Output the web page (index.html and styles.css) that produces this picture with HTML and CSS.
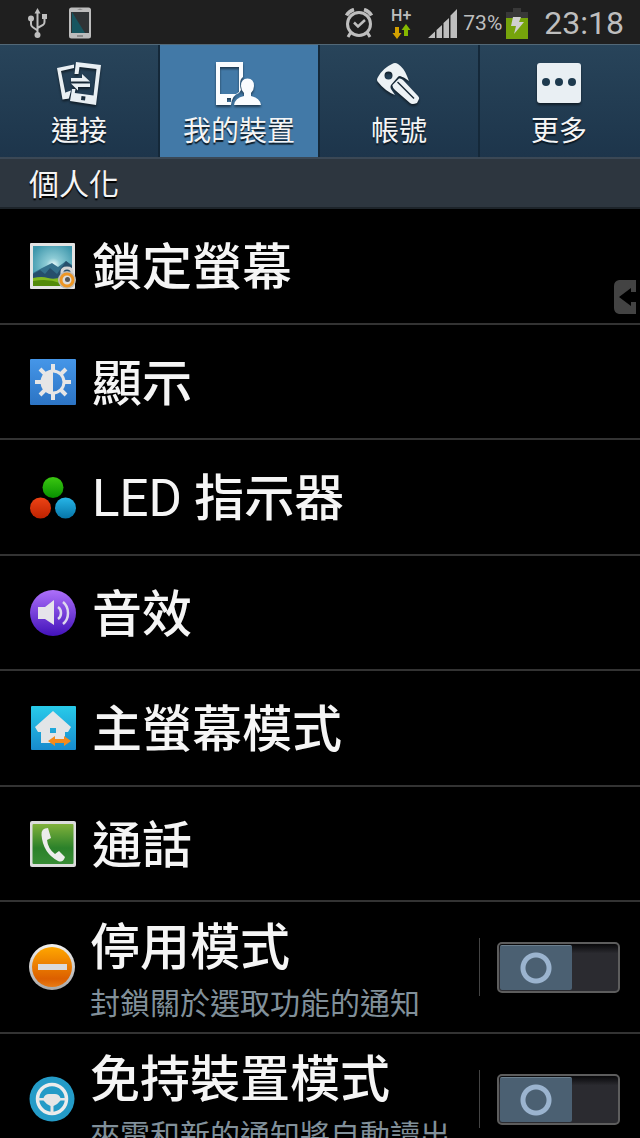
FILE: index.html
```html
<!DOCTYPE html>
<html lang="zh-Hant">
<head>
  <meta charset="UTF-8">
  <meta name="viewport" content="width=device-width, initial-scale=1.0">
  <title>設定</title>
  <link rel="stylesheet" href="styles.css">
</head>
<body>
  <header class="status-bar">
    <div class="status-left">
      <svg width="20" height="32" viewBox="0 0 20 32" fill="none" stroke="#bebebe" stroke-width="2">
        <path d="M9.500 27V5M9.500 23.500L4.500 20Q3 19 3 17V12M9.500 21L15 18Q16.500 17 16.500 15V10" stroke-width="2" />
        <path d="M9.500 1L12.500 6.500H6.500Z M14 7H19V12H14Z" fill="#bebebe" stroke="none" />
        <circle cx="3" cy="11.500" r="3" fill="#bebebe" stroke="none" />
        <circle cx="9.500" cy="28" r="3" fill="#bebebe" stroke="none" />
      </svg>
      <svg width="24" height="32" viewBox="0 0 24 32">
        <rect x="1" y="0.500" width="22" height="31" rx="2.500" fill="#bcbcbc" />
        <rect x="3" y="5" width="18" height="21" fill="#2f3335" />
        <path d="M4 5L17 26H4Z" fill="#17555f" />
        <path d="M9 3L12 1.500L15 3ZM9 28H15V30H9Z" fill="#8c8c8c" />
      </svg>
    </div>
    <div class="status-right">
      <svg width="28" height="30" viewBox="0 0 28 30" fill="none" stroke="#bebebe">
        <circle cx="14" cy="16" r="11.500" stroke-width="3" />
        <path d="M9 14.500L13 18.500L20 12" stroke-width="2.500" />
        <path d="M1.500 7.500Q4 3 9 1.500M26.500 7.500Q24 3 19 1.500" stroke-width="3.500" />
        <path d="M6 24L3 29M22 24L25 29" stroke-width="3" />
      </svg>
      <div class="network">
        <span>H+</span>
        <svg width="20" height="15" viewBox="0 0 20 15">
          <path d="M4 3H8V9H10.500L6 15L1.500 9H4Z" fill="#d2a000" />
          <path d="M13 12H17V6H19.500L15 0L10.500 6H13Z" fill="#85b800" />
        </svg>
      </div>
      <svg class="signal" width="30" height="30" viewBox="0 0 30 30" fill="#bebebe">
        <path d="M0 30L7 23.500V30ZM8.500 22L14 17V30H8.500ZM15.500 15L21 10V30H15.500ZM22.500 7.500L29 1V30H22.500Z" />
      </svg>
      <span class="percent">73%</span>
      <svg class="battery" width="22" height="32" viewBox="0 0 22 32">
        <path d="M7 1H15V5H22V32H0V5H7Z" fill="#383838" />
        <path d="M0 11H22V32H0Z" fill="#76a40b" />
        <path d="M7 10L15 10L13 15H18L8 27L10 19H5Z" fill="#d0d0d0" />
      </svg>
      <time class="clock">23:18</time>
    </div>
  </header>

  <nav class="tabs">
    <button class="tab">
      <svg width="48" height="48" viewBox="0 0 48 48">
        <g fill="#e9eff3">
          <path d="M2 8L19 4.500V8L6 11L10.500 33.500L13 33L14 38.500L7.500 39.500Z" />
          <path d="M10.500 32.500L16 30.500L14 38L8 39Z" />
          <path fill-rule="evenodd" d="M21 2L46 5L41 45L15 41L17 29L20.500 29L19.800 33L38.500 35.500L41.500 9L24.500 7L23.500 14H19.500ZM26.500 36L26 40L30 40.500L30.500 36.500Z" />
          <path d="M16 18H27V14L35 21.500H16ZM35 23.500H16L23 30.500V27H35Z" />
        </g>
      </svg>
      <span>連接</span>
    </button>
    <button class="tab active">
      <svg width="48" height="48" viewBox="0 0 48 48">
        <g fill="#fafcfe">
          <path fill-rule="evenodd" d="M1 2H28V17Q25 19 25 24Q25 27 26 30L24 33Q17 35 16 45H1ZM5 7V34H21L24 32V7ZM12 38V42H16V38Z" />
          <path d="M32.500 18.500Q39 18.500 39 26Q39 30 36 33V36Q45 38 46 45H19Q20 38 29 36V33Q26 30 26 26Q26 18.500 32.500 18.500Z" />
        </g>
      </svg>
      <span>我的裝置</span>
    </button>
    <button class="tab">
      <svg width="48" height="48" viewBox="0 0 48 48">
        <g fill="#edf2f5">
          <path fill-rule="evenodd" d="M17 4Q20 2 23 4Q29 8 32 16L34 21Q29 17 25 16Q23 16 22 18L16 25Q15 27 16 29L20 35Q10 31 3 22Q1 20 3 17Q8 8 17 4ZM13.500 11.500A4 4 0 1 0 13.500 19.500A4 4 0 1 0 13.500 11.500Z" />
          <path fill-rule="evenodd" d="M17.500 25L24 18.500Q26 18 28 20L43 36Q45 38 43.500 40L42 43Q37 45 35 43L20 30Q17 27 17.500 25ZM22 22.500L38.500 39L39.500 38L23 21.500Z" />
        </g>
      </svg>
      <span>帳號</span>
    </button>
    <button class="tab">
      <svg width="48" height="48" viewBox="0 0 48 48">
        <rect x="2" y="3" width="44" height="40" rx="3" fill="#e9eff3" />
        <g fill="#1e3a4e">
          <circle cx="11" cy="22" r="4" />
          <circle cx="24" cy="22" r="4" />
          <circle cx="37" cy="22" r="4" />
        </g>
      </svg>
      <span>更多</span>
    </button>
  </nav>

  <main>
    <h2 class="section-title">個人化</h2>

    <ul class="list">
      <li>
        <a class="row" href="#lock">
          <svg width="46" height="46" viewBox="0 0 46 46">
            <defs>
              <radialGradient id="sky" cx="0.520" cy="0.480" r="0.600">
                <stop offset="0" stop-color="#f2ffff" />
                <stop offset="0.300" stop-color="#8ccbd5" />
                <stop offset="1" stop-color="#3f97ac" />
              </radialGradient>
            </defs>
            <rect width="45" height="46" rx="1" fill="#e4e4e4" />
            <rect x="3" y="3" width="39" height="40" fill="url(#sky)" />
            <path d="M3 30L12 25L22 20L28 24L36 18L42 22V36H3Z" fill="#34708b" />
            <path d="M3 31L10 27L15 31L20 25L27 31L36 18L42 23V36H3Z" fill="#264e6b" />
            <path d="M3 35Q12 33 18 35T32 34V43H3Z" fill="#83ba20" />
            <path d="M3 38Q18 35 30 40V43H3Z" fill="#528a0b" />
            <path d="M32 32V29Q32 25 37 25T42 29V32" fill="none" stroke="#d4d4d4" stroke-width="3" />
            <circle cx="37" cy="37" r="9" fill="#bcbcbc" />
            <circle cx="37" cy="37" r="6" fill="#ddd" stroke="#ed9624" stroke-width="3" />
            <circle cx="37.500" cy="36.500" r="2.500" fill="#555" />
          </svg>
          <span class="title">鎖定螢幕</span>
        </a>
      </li>
      <li>
        <a class="row" href="#display">
          <svg width="46" height="46" viewBox="0 0 46 46">
            <defs>
              <linearGradient id="blue" x2="0" y2="1">
                <stop offset="0" stop-color="#4596e8" />
                <stop offset="1" stop-color="#2c74c4" />
              </linearGradient>
            </defs>
            <rect width="46" height="46" rx="1" fill="url(#blue)" />
            <g stroke="#e6e6e6" stroke-width="4" fill="none">
              <path d="M23 5V12M23 34V41M5 23H12M34 23H41M10 10L15 15M31 31L36 36M36 10L31 15M15 31L10 36" />
              <circle cx="23" cy="23" r="11" stroke-width="3" />
            </g>
            <path d="M23 11A12 12 0 0 0 23 35Z" fill="#e6e6e6" />
          </svg>
          <span class="title">顯示</span>
        </a>
      </li>
      <li>
        <a class="row" href="#led">
          <svg width="46" height="46" viewBox="0 0 46 46">
            <defs>
              <linearGradient id="green" x2="0" y2="1"><stop stop-color="#3bc711" /><stop offset="1" stop-color="#079100" /></linearGradient>
              <linearGradient id="red" x2="0" y2="1"><stop stop-color="#ed4315" /><stop offset="1" stop-color="#bd2200" /></linearGradient>
              <linearGradient id="cyan" x2="0" y2="1"><stop stop-color="#27b5e7" /><stop offset="1" stop-color="#0675a8" /></linearGradient>
            </defs>
            <circle cx="23" cy="13.500" r="10.500" fill="url(#green)" />
            <circle cx="10.500" cy="34" r="10.500" fill="url(#red)" />
            <circle cx="35.500" cy="34" r="10.500" fill="url(#cyan)" />
          </svg>
          <span class="title"><span class="latin">LED</span> 指示器</span>
        </a>
      </li>
      <li>
        <a class="row" href="#sound">
          <svg width="46" height="46" viewBox="0 0 46 46">
            <defs>
              <linearGradient id="purple" x2="0" y2="1"><stop stop-color="#ad70fa" /><stop offset="1" stop-color="#4212ba" /></linearGradient>
            </defs>
            <circle cx="23" cy="23" r="23" fill="url(#purple)" />
            <path d="M8 17H15L24 10V35L15 29H8Z" fill="#e6e4ea" />
            <path d="M28 17Q31 19 31 23T28 29M33 12Q38 16 38 23T33 34" fill="none" stroke="#ddd8ee" stroke-width="2.500" />
          </svg>
          <span class="title">音效</span>
        </a>
      </li>
      <li>
        <a class="row" href="#home">
          <svg width="46" height="46" viewBox="0 0 46 46">
            <defs>
              <linearGradient id="aqua" x2="0" y2="1"><stop stop-color="#28cbea" /><stop offset="1" stop-color="#178acd" /></linearGradient>
            </defs>
            <rect x="1" y="1" width="45" height="44" rx="1" fill="url(#aqua)" />
            <path fill-rule="evenodd" d="M23 6L41 22L38 27H35V38H11V27H8L5 22ZM20 23V28H26V23Z" fill="#e2e5e7" />
            <path d="M18 36L25 31V34H34V31L41 36L34 41V38H25V41Z" fill="#f38a1c" />
          </svg>
          <span class="title">主螢幕模式</span>
        </a>
      </li>
      <li>
        <a class="row" href="#call">
          <svg width="46" height="46" viewBox="0 0 46 46">
            <defs>
              <linearGradient id="leaf" x2="0" y2="1"><stop stop-color="#80b13b" /><stop offset="0.600" stop-color="#2b812a" /><stop offset="1" stop-color="#388c35" /></linearGradient>
            </defs>
            <rect width="46" height="46" rx="2" fill="#dcdcdc" />
            <rect x="2.500" y="3" width="41" height="40" rx="1" fill="url(#leaf)" />
            <path d="M18 7Q11 7 11.500 14Q13 32 28 40Q33 42 35 36L29 30L25 33Q18 28 17 19L21 17Z" fill="#ececec" />
          </svg>
          <span class="title">通話</span>
        </a>
      </li>
      <li class="row switch-row">
        <svg width="46" height="46" viewBox="0 0 46 46">
          <defs>
            <linearGradient id="orange" x2="0" y2="1"><stop stop-color="#ffa600" /><stop offset="0.800" stop-color="#dc5f00" /><stop offset="1" stop-color="#e87b16" /></linearGradient>
            <linearGradient id="rim" x2="0" y2="1"><stop stop-color="#f0f0f0" /><stop offset="1" stop-color="#a8a8a8" /></linearGradient>
          </defs>
          <circle cx="23" cy="23" r="23" fill="url(#rim)" />
          <circle cx="23" cy="23" r="20" fill="url(#orange)" />
          <rect x="9" y="20" width="29" height="6" fill="#dadada" />
        </svg>
        <label class="text" for="blocking">
          <span class="title">停用模式</span>
          <span class="subtitle">封鎖關於選取功能的通知</span>
        </label>
        <div class="switch-box">
          <input type="checkbox" class="switch" id="blocking">
        </div>
      </li>
      <li class="row switch-row">
        <svg width="46" height="46" viewBox="0 0 46 46">
          <circle cx="23" cy="23" r="22.500" fill="#249bc7" />
          <circle cx="23" cy="23" r="14.500" fill="none" stroke="#ececec" stroke-width="3.500" />
          <path d="M9 22H14.500Q16 18 20 18H26Q30 18 31.500 22H37V24.500H31.500Q29 28 24.500 30V38H21.500V30Q17 28 14.500 24.500H9Z" fill="#e6e6e6" />
        </svg>
        <label class="text" for="driving">
          <span class="title">免持裝置模式</span>
          <span class="subtitle">來電和新的通知將自動讀出</span>
        </label>
        <div class="switch-box">
          <input type="checkbox" class="switch" id="driving">
        </div>
      </li>
    </ul>
  </main>

  <button class="handle" aria-label="開啟面板">
    <svg width="24" height="36" viewBox="0 0 24 36">
      <path d="M23 1H6Q1 2 1 7V29Q1 34 6 35H23V23H18V27L6 18L18 9V13H23Z" fill="#434343" />
    </svg>
  </button>
</body>
</html>
```
FILE: styles.css
```css
* {
  box-sizing: border-box;
}

body {
  position: relative;
  height: 100vh;
  margin: 0;
  overflow: hidden;
  background: #000;
  color: #f5f5f5;
  font-family: Roboto, "Noto Sans CJK TC", sans-serif;
}

svg {
  display: block;
  flex-shrink: 0;
}

button {
  border: none;
  padding: 0;
  background: none;
  color: inherit;
  font-family: inherit;
  cursor: pointer;
}

/* status bar */

.status-bar {
  display: flex;
  align-items: center;
  justify-content: space-between;
  height: 44px;
  padding: 2px 16px 0 28px;
  background: #1f1f1f;
  color: #bebebe;
}

.status-left,
.status-right {
  display: flex;
  align-items: center;
}

.status-left {
  gap: 20px;
}

.network {
  display: flex;
  flex-direction: column;
  align-items: center;
  margin: 0 17px 0 18px;
  font-size: 16px;
  font-weight: 500;
  line-height: 16px;
}

.percent {
  margin: 0 4px 0 5px;
  font-size: 21px;
}

.clock {
  margin-left: 16px;
  font-size: 32px;
  line-height: 40px;
}

/* tabs */

.tabs {
  display: flex;
  height: 113px;
  background: linear-gradient(#28445a, #1d354b);
  border-top: 1px solid #526877;
}

.tab {
  display: flex;
  width: 25%;
  flex-direction: column;
  align-items: center;
  padding-top: 15px;
  border-right: 2px solid #142839;
  font-size: 28px;
  line-height: 48px;
  text-shadow: 0 2px 1px #0c1a26;
}

.tab:last-child {
  border-right-color: transparent;
}

.tab svg {
  filter: drop-shadow(0 2px 1px rgba(0, 0, 0, 0.5));
}

.tab.active {
  background: #4279a7;
}

/* list */

.section-title {
  margin: 0;
  height: 52px;
  padding: 0 29px;
  background: #2d363f;
  border-top: 2px solid #3b4855;
  border-bottom: 2px solid #1d242a;
  font-size: 30px;
  font-weight: 400;
  line-height: 52px;
  text-shadow: 0 2px 1px #000;
}

.list {
  margin: 0;
  padding: 0;
  list-style: none;
}

.row {
  display: flex;
  align-items: center;
  gap: 16px;
  height: 115px;
  padding: 0 20px 0 30px;
  border-bottom: 2px solid #333;
  color: inherit;
  text-decoration: none;
}

li:nth-child(odd) .row {
  height: 116px;
}

.title {
  font-size: 50px;
  font-weight: 500;
  line-height: 64px;
}

.row > .title {
  padding-top: 4px;
}

.latin {
  font-size: 51px;
  font-weight: 400;
}

.switch-row {
  gap: 15px;
  height: 132px;
  padding-left: 29px;
}

.text {
  display: flex;
  flex: 1;
  flex-direction: column;
  padding-top: 10px;
  white-space: nowrap;
}

.subtitle {
  color: #81909a;
  font-size: 30px;
  line-height: 48px;
}

.switch-box {
  display: flex;
  align-items: center;
  height: 58px;
  padding-left: 17px;
  border-left: 1px solid #444;
}

.switch {
  appearance: none;
  display: flex;
  width: 123px;
  height: 51px;
  margin: 0;
  padding: 1px;
  border: 2px solid #5d5d5d;
  border-radius: 5px;
  background: linear-gradient(#08080a, #2b2b30 20%);
  cursor: pointer;
}

.switch::before {
  content: "";
  width: 72px;
  border-radius: 2px;
  border-top: 1px solid #6b7f8e;
  background: radial-gradient(circle, transparent 10px, #9bb4cf 11px, #9bb4cf 15px, transparent 16px), #4b6072;
}

.switch:checked {
  justify-content: flex-end;
}

/* side panel handle, floats over the list */

.handle {
  position: absolute;
  top: 279px;
  right: 3px;
}
```
